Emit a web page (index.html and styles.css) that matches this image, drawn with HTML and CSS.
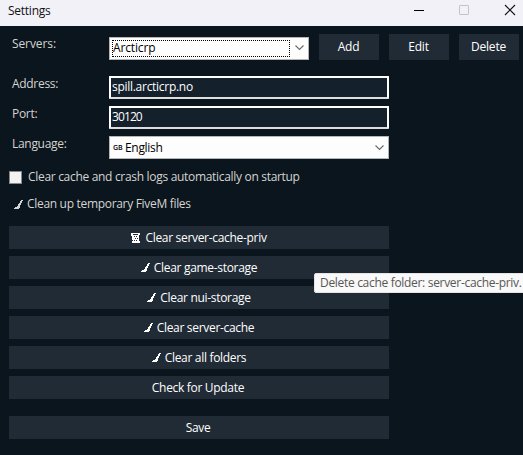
FILE: index.html
```html
<!DOCTYPE html>
<html lang="en">
<head>
<meta charset="utf-8">
<title>Settings</title>
<link rel="stylesheet" href="styles.css">
</head>
<body>
<svg class="defs" width="0" height="0">
  <symbol id="broom" viewBox="0 0 9 9"><path d="M7 0h2v1H8v2H7v2H6v3H5v1H0V8h1V7h2V6h1V4h1V3h1V1h1z"/></symbol>
  <symbol id="bin" viewBox="0 0 10 10"><path fill-rule="evenodd" d="M0 0h9v2H8v6h1v2H1V8h1V7H1V3H0zM2 1v1h5V1zM3 3v1h1V3zM5 3v1h1V3zM4 5v1h1V5zM6 5v1h1V5zM3 7v1h1V7zM5 7v1h1V7z"/></symbol>
  <symbol id="chevron" viewBox="0 0 9 6"><path d="M.5.5l4 4 4-4" fill="none" stroke="#6b6b6b" stroke-width="1.1"/></symbol>
</svg>
<header class="titlebar">
  <span class="title">Settings</span>
  <svg class="controls" width="106" height="12" viewBox="0 0 106 12">
    <path d="M0 6.5h10" stroke="#000"/>
    <rect x="45.5" y="1.5" width="9" height="9" rx=".5" fill="none" stroke="#c5c3c9"/>
    <path d="M91 1l10 10M101 1l-10 10" stroke="#111" stroke-width="1.1"/>
  </svg>
</header>
<main class="content">
  <div class="row servers">
    <span class="label">Servers:</span>
    <div class="combo focused"><span class="value"><span>Arcticrp</span></span><svg class="chev"><use href="#chevron"/></svg></div>
    <div class="btn small">Add</div>
    <div class="btn small">Edit</div>
    <div class="btn small">Delete</div>
  </div>
  <div class="row"><span class="label">Address:</span><div class="input"><span class="host">spill.arcticrp.no</span></div></div>
  <div class="row"><span class="label">Port:</span><div class="input"><span class="port">30120</span></div></div>
  <div class="row"><span class="label">Language:</span><div class="combo wide"><span class="value"><span class="flag">GB</span><span>English</span></span><svg class="chev"><use href="#chevron"/></svg></div></div>
  <div class="check"><i class="box"></i><span>Clear cache and crash logs automatically on startup</span></div>
  <div class="cleanup"><svg class="broom"><use href="#broom"/></svg><span>Clean up temporary FiveM files</span></div>
  <div class="actions">
    <div class="btn"><svg class="bin"><use href="#bin"/></svg><span>Clear server-cache-priv</span></div>
    <div class="btn"><svg class="broom"><use href="#broom"/></svg><span>Clear game-storage</span></div>
    <div class="btn"><svg class="broom"><use href="#broom"/></svg><span>Clear nui-storage</span></div>
    <div class="btn"><svg class="broom"><use href="#broom"/></svg><span>Clear server-cache</span></div>
    <div class="btn"><svg class="broom"><use href="#broom"/></svg><span>Clear all folders</span></div>
    <div class="btn update"><span>Check for Update</span></div>
    <div class="btn save"><span>Save</span></div>
  </div>
</main>
<div class="tooltip">Delete cache folder: server-cache-priv.</div>
</body>
</html>
```
FILE: styles.css
```css
* { box-sizing: border-box; }
body {
  margin: 0;
  width: 523px;
  height: 455px;
  overflow: hidden;
  position: relative;
  background: #0b151e;
  color: #fff;
  font: 12px/16px "Open Sans", "Noto Sans", sans-serif;
  letter-spacing: -.31px;
  white-space: nowrap;
}
svg { flex: none; display: block; }
.defs { position: absolute; }
.titlebar {
  height: 26px;
  background: #f3f1f8;
  color: #111;
  display: flex;
  justify-content: space-between;
  padding: 3px 3px 0 8px;
}
.title { letter-spacing: -.25px; }
.controls { margin-top: 1px; }
.content { padding: 8px 0 0 9px; }
.row { display: flex; height: 23px; margin-bottom: 7px; }
.servers { height: 26px; margin-bottom: 16px; align-items: center; }
.label { width: 100px; flex: none; padding-left: 3px; color: #d4d4d0; line-height: 16px; letter-spacing: -.3px; }
.servers .label { align-self: flex-start; padding-top: 2px; letter-spacing: -.1px; }
.combo {
  width: 200px;
  height: 23px;
  flex: none;
  margin-right: 10px;
  background: #fdfdfd;
  border: 1px solid #b5b5b5;
  color: #000;
  display: flex;
  align-items: center;
}
.focused { position: relative; top: 1px; padding-left: 2px; letter-spacing: -.15px; }
.focused .value { width: 178px; height: 17px; border: 1px dotted #000; }
.combo.wide { width: 280px; padding-left: 3px; }
.value { display: flex; align-items: center; flex: none; }
.flag { font-size: 7px; font-weight: 600; line-height: 8px; letter-spacing: 0; margin-right: 2px; padding-top: 1px; width: 10px; }
.chev { width: 9px; height: 6px; margin-left: auto; margin-right: 4px; }
.input {
  width: 280px;
  height: 23px;
  background: #14202b;
  border: 2px solid #fff;
  border-bottom-color: #ddd;
  border-radius: 1px;
  padding: 1px 0 0 1px;
}
.host { letter-spacing: -.28px; }
.port { letter-spacing: -.9px; }
.btn {
  height: 23px;
  background: #212b36;
  display: flex;
  align-items: center;
  justify-content: center;
}
.btn.small { width: 60px; height: 26px; margin-right: 10px; padding-right: 1px; flex: none; letter-spacing: -.2px; }
.check { display: flex; align-items: center; height: 16px; margin-top: 10px; color: #d4d4d0; }
.box { width: 13px; height: 13px; background: #f2f2f2; border: 1px solid #888; margin-right: 6px; }
.cleanup { display: flex; align-items: center; height: 16px; margin-top: 11px; padding-left: 5px; color: #d4d4d0; }
.broom { width: 9px; height: 9px; margin-right: 4px; fill: currentColor; shape-rendering: crispEdges; }
.bin { width: 10px; height: 10px; margin-right: 4px; fill: currentColor; shape-rendering: crispEdges; }
.actions { width: 380px; margin-top: 14px; display: grid; gap: 7px; }
.update { padding-right: 2px; }
.save { margin-top: 10px; padding-right: 2px; }
.tooltip {
  position: absolute;
  left: 314px;
  top: 273px;
  width: 220px;
  height: 20px;
  background: #f9f9f9;
  border: 1px solid #e4e4e4;
  border-radius: 2px;
  color: #575757;
  padding: 1px 5px;
}
```
